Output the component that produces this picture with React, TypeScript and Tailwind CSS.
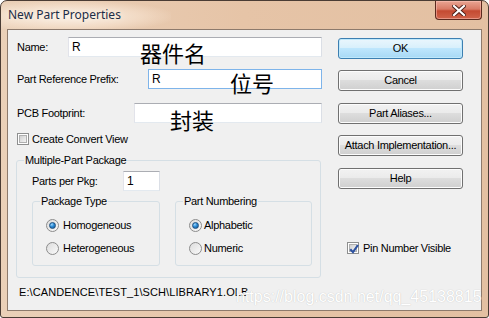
import React from "react";

const F = "[font-family:'Liberation_Sans',Arial,sans-serif] text-[11px] tracking-[-0.3px] text-black";

function Btn({ label, primary }: { label: string; primary?: boolean }) {
  return (
    <div
      className={
        "h-[21px] w-[125px] rounded-[3px] border flex items-center justify-center " +
        (primary
          ? "border-[#3c7fb1] bg-[linear-gradient(#eaf6fd_0%,#d9f0fc_45%,#bee6fd_50%,#a7d9f5_100%)] shadow-[inset_0_0_0_1px_#bfe8fb]"
          : "border-[#707070] bg-[linear-gradient(#f2f2f2_0%,#ebebeb_45%,#dddddd_50%,#cfcfcf_100%)] shadow-[inset_0_0_0_1px_#fcfcfc]")
      }
    >
      <span className={F}>{label}</span>
    </div>
  );
}

function Check({ checked }: { checked?: boolean }) {
  return (
    <div className="w-[12px] h-[12px] border border-[#8e8f8f] bg-white p-[1px] shrink-0">
      <div className="w-full h-full border border-[#b0b0b0] bg-[linear-gradient(135deg,#d0d0d0,#f4f4f4)] relative">
        {checked && (
          <svg viewBox="0 0 8 8" className="absolute left-[-1px] top-[-1px] w-[10px] h-[10px]">
            <path d="M1 4.2 L3.2 6.5 L7.2 0.8" stroke="#2d52a0" strokeWidth="1.7" fill="none" />
          </svg>
        )}
      </div>
    </div>
  );
}

function Radio({ checked }: { checked?: boolean }) {
  return (
    <div className="w-[13px] h-[13px] rounded-full border border-[#8c8c8c] bg-[linear-gradient(135deg,#dcdcdc,#fafafa)] flex items-center justify-center shrink-0">
      {checked && (
        <div className="w-[7px] h-[7px] rounded-full bg-[radial-gradient(circle_at_35%_30%,#9fd8ff_0%,#2a8bd6_45%,#15518a_100%)] border border-[#1d4f80]" />
      )}
    </div>
  );
}

function Input({ w, value, focus }: { w: number; value?: string; focus?: boolean }) {
  return (
    <div
      style={{ width: w }}
      className={
        "ml-auto h-[20px] bg-white border flex items-center pl-[3px] " +
        (focus ? "border-[#7eb4ea]" : "border-[#abadb3] border-l-[#e2e3ea] border-r-[#dbdfe6] border-b-[#e3e9ef]")
      }
    >
      <span className={F + " text-[12px]"}>{value}</span>
    </div>
  );
}

export default function App() {
  return (
    <div className="w-[489px] h-[318px] rounded-t-[7px] rounded-b-[3px] border border-[#4a3c34] bg-[linear-gradient(90deg,#ead0b8_0%,#e6c4a7_50%,#e3c0a2_100%)] px-[6px] pb-[6px] flex flex-col">
      <div className="h-[28px] flex items-start relative">
        <div className="absolute left-[-6px] top-0 w-[170px] h-[28px] bg-[radial-gradient(ellipse_at_40%_55%,rgba(255,248,240,0.85)_0%,rgba(255,240,225,0.4)_50%,rgba(255,255,255,0)_75%)]" />
        <span className="relative mt-[5px] ml-[1px] [font-family:'Noto_Sans',sans-serif] text-[12px] text-[#1b2c46] [text-shadow:0_0_6px_#fff5ea]">
          New Part Properties
        </span>
        <div className="ml-auto mr-[0px] mt-[0px] w-[47px] h-[19px] rounded-b-[4px] border border-t-0 border-[#5b2a1f] bg-[linear-gradient(#e9a593_0%,#d87b66_45%,#c44a32_55%,#d0644b_100%)] flex items-center justify-center shadow-[inset_0_0_0_1px_rgba(255,200,190,0.5)]">
          <svg viewBox="0 0 14 11" className="w-[14px] h-[11px]">
            <path d="M2 1 L12 10 M12 1 L2 10" stroke="#4a1d15" strokeWidth="4" strokeLinecap="square" />
            <path d="M2 1 L12 10 M12 1 L2 10" stroke="#ffffff" strokeWidth="2.2" strokeLinecap="square" />
          </svg>
        </div>
      </div>
      <div className="flex-1 border border-[#8d7a6c] bg-[#f0f0f0] relative flex flex-col">
        <div className="flex">
          {/* left column */}
          <div className="w-[314px] flex flex-col">
            <div className="mt-[7px] h-[20px] flex items-center">
              <span className={F + " ml-[9px]"}>Name:</span>
              <Input w={254} value="R" />
            </div>
            <div className="mt-[12px] h-[20px] flex items-center">
              <span className={F + " ml-[9px]"}>Part Reference Prefix:</span>
              <Input w={174} value="R" focus />
            </div>
            <div className="mt-[14px] h-[20px] flex items-center">
              <span className={F + " ml-[9px]"}>PCB Footprint:</span>
              <Input w={188} />
            </div>
            <div className="mt-[10px] h-[12px] flex items-center ml-[9px] gap-[3px]">
              <Check />
              <span className={F}>Create Convert View</span>
            </div>
            <div className="mt-[15px] ml-[8px] w-[305px] h-[118px] border border-[#d5dfe5] rounded-[3px] relative flex flex-col">
              <span className={F + " absolute left-[7px] top-[-8px] bg-[#f0f0f0] px-[1px] leading-[14px]"}>Multiple-Part Package</span>
              <div className="mt-[10px] h-[20px] flex items-center">
                <span className={F + " ml-[15px]"}>Parts per Pkg:</span>
                <div className="ml-auto mr-[160px] w-[37px] h-[20px] bg-white border border-[#abadb3] border-l-[#e2e3ea] border-r-[#dbdfe6] border-b-[#e3e9ef] flex items-center pl-[3px]">
                  <span className={F + " text-[12px]"}>1</span>
                </div>
              </div>
              <div className="mt-[10px] flex ml-[15px] gap-[15px]">
                <div className="w-[128px] h-[65px] border border-[#d5dfe5] rounded-[3px] relative flex flex-col">
                  <span className={F + " absolute left-[7px] top-[-8px] bg-[#f0f0f0] px-[1px] leading-[14px]"}>Package Type</span>
                  <div className="mt-[17px] ml-[13px] h-[13px] flex items-center gap-[4px]">
                    <Radio checked />
                    <span className={F}>Homogeneous</span>
                  </div>
                  <div className="mt-[10px] ml-[13px] h-[13px] flex items-center gap-[4px]">
                    <Radio />
                    <span className={F}>Heterogeneous</span>
                  </div>
                </div>
                <div className="w-[137px] h-[65px] border border-[#d5dfe5] rounded-[3px] relative flex flex-col">
                  <span className={F + " absolute left-[7px] top-[-8px] bg-[#f0f0f0] px-[1px] leading-[14px]"}>Part Numbering</span>
                  <div className="mt-[17px] ml-[13px] h-[13px] flex items-center gap-[2px]">
                    <Radio checked />
                    <span className={F}>Alphabetic</span>
                  </div>
                  <div className="mt-[10px] ml-[13px] h-[13px] flex items-center gap-[2px]">
                    <Radio />
                    <span className={F}>Numeric</span>
                  </div>
                </div>
              </div>
            </div>
          </div>
          {/* right column */}
          <div className="ml-[16px] flex flex-col">
            <div className="mt-[8px]"><Btn label="OK" primary /></div>
            <div className="mt-[11px]"><Btn label="Cancel" /></div>
            <div className="mt-[12px]"><Btn label="Part Aliases..." /></div>
            <div className="mt-[11px]"><Btn label="Attach Implementation..." /></div>
            <div className="mt-[12px]"><Btn label="Help" /></div>
            <div className="mt-[53px] ml-[9px] h-[12px] flex items-center gap-[4px]">
              <Check checked />
              <span className={F}>Pin Number Visible</span>
            </div>
          </div>
        </div>
        <div className="mt-[7px] ml-[11px] h-[14px] flex items-center">
          <span className={F + " tracking-[0.1px]"}>E:\CANDENCE\TEST_1\SCH\LIBRARY1.OLB</span>
        </div>
        {/* annotation overlays */}
        <span className="absolute left-[132px] top-[9px] [font-family:'Noto_Sans_CJK_SC',sans-serif] text-[22px] leading-[26px] text-black">器件名</span>
        <span className="absolute left-[222px] top-[39px] [font-family:'Noto_Sans_CJK_SC',sans-serif] text-[22px] leading-[26px] text-black">位号</span>
        <span className="absolute left-[162px] top-[76px] [font-family:'Noto_Sans_CJK_SC',sans-serif] text-[22px] leading-[26px] text-black">封装</span>
        <span className="absolute left-[228px] top-[257px] [font-family:'Liberation_Sans',Arial,sans-serif] text-[16px] leading-[20px] text-white [text-shadow:0_0_1px_#b8b8b8]">https://blog.csdn.net/qq_45138815</span>
      </div>
    </div>
  );
}
